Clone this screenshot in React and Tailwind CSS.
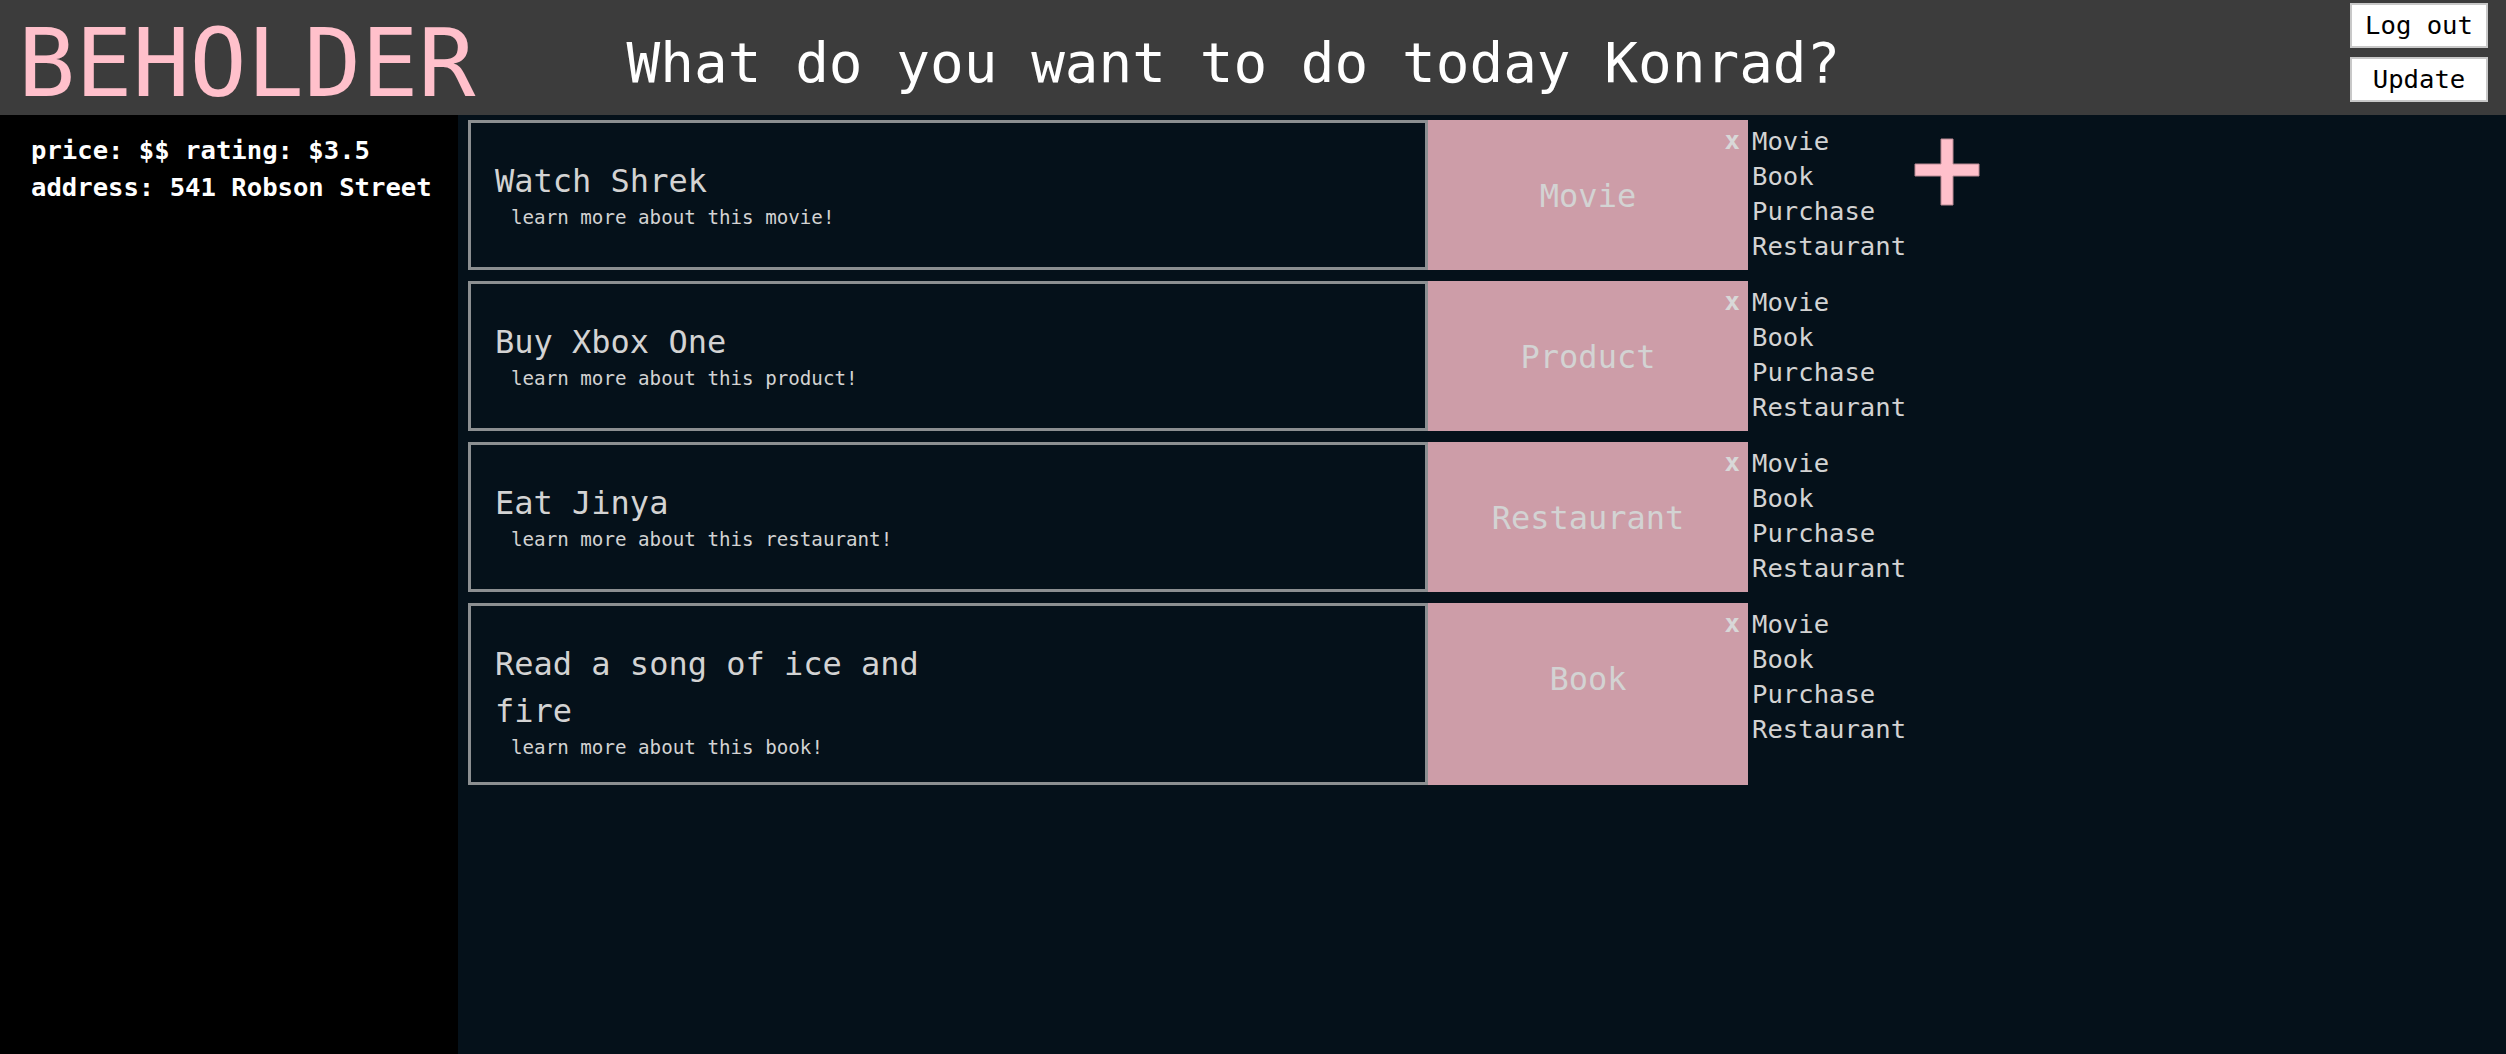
import React from 'react'

const items = [
  { title: 'Watch Shrek', kind: 'movie', label: 'Movie' },
  { title: 'Buy Xbox One', kind: 'product', label: 'Product' },
  { title: 'Eat Jinya', kind: 'restaurant', label: 'Restaurant' },
  { title: 'Read a song of ice and fire', kind: 'book', label: 'Book' },
]

const categories = ['Movie', 'Book', 'Purchase', 'Restaurant']

function Plus() {
  return (
    <svg width="66" height="68" viewBox="0 0 66 68" className="block">
      <path
        d="M27 1h12v25h26v12H39v29H27V38H1V26h26z"
        fill="#ffc0cb"
        stroke="#b98a93"
        strokeWidth="1"
      />
    </svg>
  )
}

function TodoRow({ item, first }) {
  return (
    <div className="flex items-start">
      <div className="flex items-stretch">
        {/* Card text */}
        <div className="w-[960px] min-h-[150px] border-[3px] border-[#8c8f91] pt-[35px] pb-[22px] pl-[24px] text-[#d3d3d3]">
          <div className="max-w-[480px] text-[32px] leading-[47px]">{item.title}</div>
          <div className="ml-[16px] text-[19.2px] leading-[25px]">learn more about this {item.kind}!</div>
        </div>
        {/* Category box */}
        <div className="relative w-[320px] bg-[#cd9da8] pt-[52px] text-center text-[32px] leading-normal text-[#d3d3d3]">
          <span className="absolute top-[1px] right-[8px] text-[25.6px] leading-normal font-bold text-[#d8d8d8]">x</span>
          {item.label}
        </div>
      </div>

      {/* Category picker */}
      <div className="ml-[4px] pt-[4px] flex flex-col text-[25.6px] leading-[35px] text-[#d3d3d3]">
        {categories.map(c => (
          <span key={c}>{c}</span>
        ))}
      </div>

      {first && (
        <div className="ml-[8px] mt-[18px]">
          <Plus />
        </div>
      )}
    </div>
  )
}

export default function App() {
  return (
    <div className="min-h-screen flex flex-col bg-[#05111a] font-['DejaVu_Sans_Mono','Liberation_Mono',monospace]">
      {/* Header */}
      <header className="h-[115px] shrink-0 bg-[#3c3c3c] flex items-start">
        <h1 className="ml-[18px] mt-[16px] text-[95px] leading-none text-[#ffc0cb]">BEHOLDER</h1>
        <h2 className="ml-[151px] mt-[35px] text-[56px] leading-none text-white">What do you want to do today Konrad?</h2>
        <div className="ml-auto mr-[18px] mt-[3px] flex flex-col gap-[9px]">
          <button className="w-[138px] h-[45px] bg-white border-2 border-[#c8c8c8] text-black text-[25.6px] leading-none">
            Log out
          </button>
          <button className="w-[138px] h-[45px] bg-white border-2 border-[#c8c8c8] text-black text-[25.6px] leading-none">
            Update
          </button>
        </div>
      </header>

      <div className="flex flex-1">
        {/* Sidebar */}
        <aside className="w-[458px] shrink-0 bg-black pt-[17px] pl-[31px] text-white text-[25.6px] leading-[37px] font-bold">
          <div>price: $$ rating: $3.5</div>
          <div>address: 541 Robson Street</div>
        </aside>

        {/* Todo list */}
        <main className="flex-1 pl-[10px] pt-[5px] flex flex-col gap-[11px]">
          {items.map((item, i) => (
            <TodoRow key={item.title} item={item} first={i === 0} />
          ))}
        </main>
      </div>
    </div>
  )
}
